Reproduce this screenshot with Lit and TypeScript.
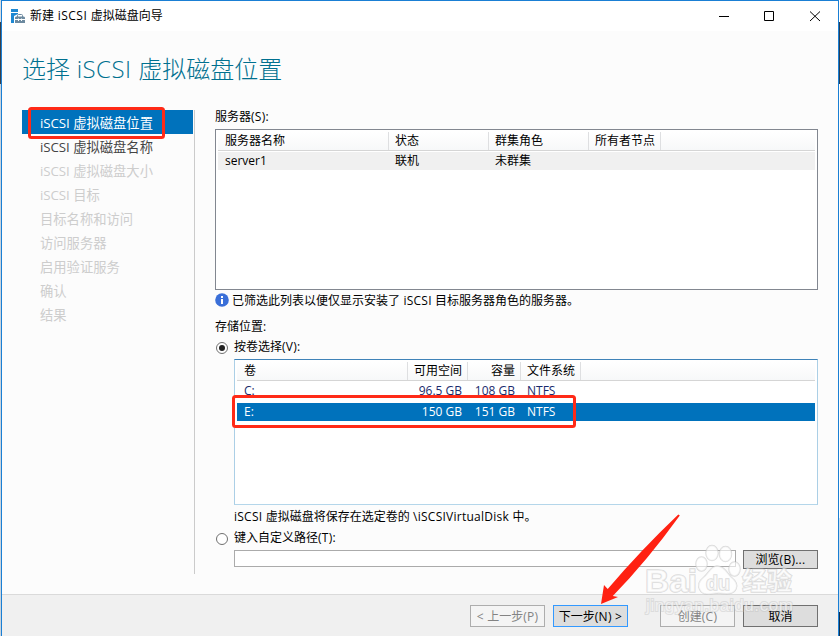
import { LitElement, html, css } from "lit";
import { customElement } from "lit/decorators.js";

const steps = [
  "iSCSI 虚拟磁盘位置",
  "iSCSI 虚拟磁盘名称",
  "iSCSI 虚拟磁盘大小",
  "iSCSI 目标",
  "目标名称和访问",
  "访问服务器",
  "启用验证服务",
  "确认",
  "结果",
];

// Latin runs are wrapped so that their tracking can differ from the Chinese text.
const mix = (s: string) =>
  s.split(/([\x20-\x7e]+)/).map((p) => (/^[\x20-\x7e]/.test(p) ? html`<span class="la">${p}</span>` : p));

@customElement("app-root")
export class AppRoot extends LitElement {
  static styles = css`
    :host { display: block; width: 840px; height: 636px; overflow: hidden; position: relative;
      font: 12px/16px "Open Sans", "Noto Sans CJK SC", sans-serif; color: #000; background: #fcfcfc; }
    * { box-sizing: border-box; }
    .la { white-space: pre; letter-spacing: var(--tr, 0.25px); }
    .desktop { display: flex; height: 636px; }
    .left { width: 1px; background: linear-gradient(#d8dde2 0 22px, #3a4048 22px 84px, #c9d3dd 84px); }
    .right { width: 1px; background: linear-gradient(#fff 0 22px, #26405a 22px 84px, #fff 84px 518px, #cfe0ee 518px 612px, #12314f 612px); }
    .window { flex: 1; border: 1px solid #1a7fd4; border-bottom: 0; display: flex; flex-direction: column; background: #fcfcfc; }
    .bar { height: 30px; background: #fff; display: flex; align-items: center; padding-left: 9px; --tr: 0.5px; }
    .bar .name { flex: 1; padding-left: 4px; }
    .bar svg { display: block; }
    .body { flex: 1; display: flex; flex-direction: column; }
    h1 { margin: 0; height: 79px; padding: 18px 0 0 20px; font-weight: 300; font-size: 24px; line-height: 40px; color: #00708f; --tr: 0.45px; }
    .cols { display: flex; }
    nav { width: 193px; height: 464px; border-right: 1px solid #cbcbcb; padding: 0 1px 0 20px; font-size: 13.3px; color: #cdcdcd; --tr: -0.05px; }
    nav div { height: 24px; line-height: 27px; padding-left: 18px; }
    nav .on { background: #0072bc; color: #fff; }
    nav .next { color: #444; }
    main { width: 603px; margin-left: 20px; height: 484px; display: flex; flex-direction: column; }
    .label { height: 19px; line-height: 15px; }
    .label.first { line-height: 14px; }
    .table { border: 1px solid #828790; background: #fff; padding: 2px 2px 0; }
    .srv { height: 161px; }
    .vol { height: 146px; margin-left: 19px; border-color: #3f83b8 #abcfe6 #b4d6ea; }
    .head { display: flex; height: 19px; border-bottom: 1px solid #d5d5d5; background: linear-gradient(#fff, #f7f8f9); }
    .head span, .row > span { padding: 0 0 0 6px; line-height: 17px; white-space: nowrap; }
    .head span:first-child, .row > span:first-child { padding-left: 7px; }
    .head > span { border-right: 1px solid #dedfe1; }
    .row { display: flex; height: 18px; margin-top: 1px; }
    .row > span { line-height: 18px; border-right: 1px solid transparent; }
    .alt { background: #f0f0f0; }
    .navy { color: #1a2a6c; }
    .row.navy > span { line-height: 17px; }
    .sel { background: #0072bc; color: #fff; margin-top: 3px; }
    .w170 { width: 171px; } .w100 { width: 100px; } .w72 { width: 72px; }
    .v1 { width: 171px; } .v2 { width: 60px; text-align: right; } .v3 { width: 53px; text-align: right; } .v4 { width: 60px; }
    .head .v2, .row .v2, .head .v3, .row .v3 { padding: 0 5px 0 0; }
    .info { display: flex; height: 29px; padding-top: 3px; gap: 3px; }
    .opt { display: flex; gap: 5px; height: 21px; }
    .opt.first { padding-top: 1px; }
    .opt.last { height: 20px; }
    .opt svg, .info svg { flex: none; }
    .note { margin: 4px 0 0 19px; height: 21px; }
    .path { display: flex; margin-left: 19px; gap: 7px; align-items: flex-start; }
    .input { width: 502px; height: 17px; border: 1px solid #ababab; background: #fff; }
    .btn { width: 75px; height: 22px; border: 1px solid #adadad; background: #f4f4f4; color: #838383; text-align: center; line-height: 22px; white-space: nowrap; }
    .dark { border-color: #707070; background: #ddd; color: #000; }
    .def { border-color: #3399ff; background: #ddd; color: #000; margin-right: 24px; }
    .path .btn { height: 19px; line-height: 18px; }
    footer { height: 42px; border-top: 1px solid #dadada; background: #f0f0f0; display: flex; gap: 8px; justify-content: flex-end; padding: 10px 20px 0 0; }
    .over { position: absolute; left: 0; top: 0; }
    .wm { font-family: "Liberation Sans", "Noto Sans CJK SC", sans-serif; font-weight: 700; fill: #fff; fill-opacity: 0.6; stroke: #bdbdbd; stroke-opacity: 0.55; stroke-width: 1.5px; paint-order: stroke; }
    .url { font-weight: 400; stroke-width: 2px; stroke-opacity: 0.4; }
  `;

  render() {
    return html`
      <div class="desktop">
        <div class="left"></div>
        <div class="window">
          <div class="bar">
            <svg width="15" height="15" viewBox="0 0 15 15">
              <path d="M0 0H7V3H0ZM0 4H7V5L3 7V14H0Z" fill="#1e88d2" />
              <path d="M6.5 8V6.5Q6.5 5.5 7.5 5.5H10.5Q11.5 5.5 11.5 6.5V8" fill="none" stroke="#6d8aa0" />
              <path d="M4 10V8.5L5 7.5H13L14 8.5V10H11V9.5H10V10H8V9.5H7V10ZM4 11H7V12H8V11H10V12H11V11H14V14H4Z" fill="#6d8aa0" />
            </svg>
            <div class="name">${mix("新建 iSCSI 虚拟磁盘向导")}</div>
            <svg width="121" height="30" fill="none" stroke="#000">
              <path d="M2 15.5H12M47.5 10.5H56.5V19.5H47.5ZM93 10.5L103 20M103 10.5L93 20" />
            </svg>
          </div>
          <div class="body">
            <h1>${mix("选择 iSCSI 虚拟磁盘位置")}</h1>
            <div class="cols">
              <nav>${steps.map((s, i) => html`<div class=${i === 0 ? "on" : i === 1 ? "next" : ""}>${mix(s)}</div>`)}</nav>
              <main>
                <div class="label first">${mix("服务器(S):")}</div>
                <div class="table srv">
                  <div class="head"><span class="w170">服务器名称</span><span class="w100">状态</span><span class="w100">群集角色</span><span class="w72">所有者节点</span></div>
                  <div class="row alt"><span class="w170">server1</span><span class="w100">联机</span><span class="w100">未群集</span></div>
                </div>
                <div class="info">
                  <svg width="14" height="14"><circle cx="7" cy="7" r="6.8" fill="#3a6fd8" /><path d="M6 6H8V11H6ZM6 3H8V5H6Z" fill="#fff" /></svg>
                  <div>${mix("已筛选此列表以便仅显示安装了 iSCSI 目标服务器角色的服务器。")}</div>
                </div>
                <div class="label">存储位置:</div>
                <div class="opt first">
                  <svg width="14" height="18"><circle cx="7" cy="9" r="5.5" fill="#fff" stroke="#707070" /><circle cx="7" cy="9" r="3" fill="#222" /></svg>
                  <div>${mix("按卷选择(V):")}</div>
                </div>
                <div class="table vol">
                  <div class="head"><span class="v1">卷</span><span class="v2">可用空间</span><span class="v3">容量</span><span class="v4">文件系统</span></div>
                  <div class="row navy"><span class="v1">C:</span><span class="v2">96.5 GB</span><span class="v3">108 GB</span><span class="v4">NTFS</span></div>
                  <div class="row sel"><span class="v1">E:</span><span class="v2">150 GB</span><span class="v3">151 GB</span><span class="v4">NTFS</span></div>
                </div>
                <div class="note">${mix("iSCSI 虚拟磁盘将保存在选定卷的 \\iSCSIVirtualDisk 中。")}</div>
                <div class="opt last">
                  <svg width="14" height="18"><circle cx="7" cy="9" r="5.5" fill="#fff" stroke="#707070" /></svg>
                  <div>${mix("键入自定义路径(T):")}</div>
                </div>
                <div class="path"><div class="input"></div><div class="btn dark">${mix("浏览(B)...")}</div></div>
              </main>
            </div>
          </div>
          <footer>
            <div class="btn">${mix("< 上一步(P)")}</div>
            <div class="btn def">${mix("下一步(N) >")}</div>
            <div class="btn">${mix("创建(C)")}</div>
            <div class="btn dark">取消</div>
          </footer>
        </div>
        <div class="right"></div>
      </div>
      <svg class="over" width="840" height="636">
        <g class="wm">
          <text x="645" y="592" font-size="32" textLength="52" lengthAdjust="spacingAndGlyphs">Bai</text>
          <ellipse cx="701.5" cy="564" rx="5.5" ry="7" />
          <ellipse cx="712" cy="553" rx="6" ry="7.5" />
          <ellipse cx="725.5" cy="554" rx="6" ry="7.5" />
          <ellipse cx="734.5" cy="569" rx="5.5" ry="7" />
          <path d="M717 566C724 566 727 573 731 577C736 581 738 585 736 589C733 595 726 594 718 593C711 594 703 596 700 590C697 585 699 581 704 577C709 573 711 566 717 566Z" />
          <text x="706" y="590" font-size="20" textLength="24" lengthAdjust="spacingAndGlyphs">du</text>
          <text x="742" y="590" font-size="25" textLength="50">经验</text>
          <text class="url" x="646" y="611" font-size="17" textLength="147">jingyan.baidu.com</text>
        </g>
        <g fill="none" stroke="#ff2a17" stroke-width="3">
          <rect x="29.5" y="108.5" width="134" height="29" rx="2" />
          <rect x="233.5" y="396.5" width="341" height="30" rx="2" />
        </g>
        <path d="M678.3 514.5L679.8 515.5Q647 561 612.8 596L618 597L601 604L604 585L607.7 589Q640 551 678.3 514.5Z" fill="#ff2112" />
      </svg>
    `;
  }
}
